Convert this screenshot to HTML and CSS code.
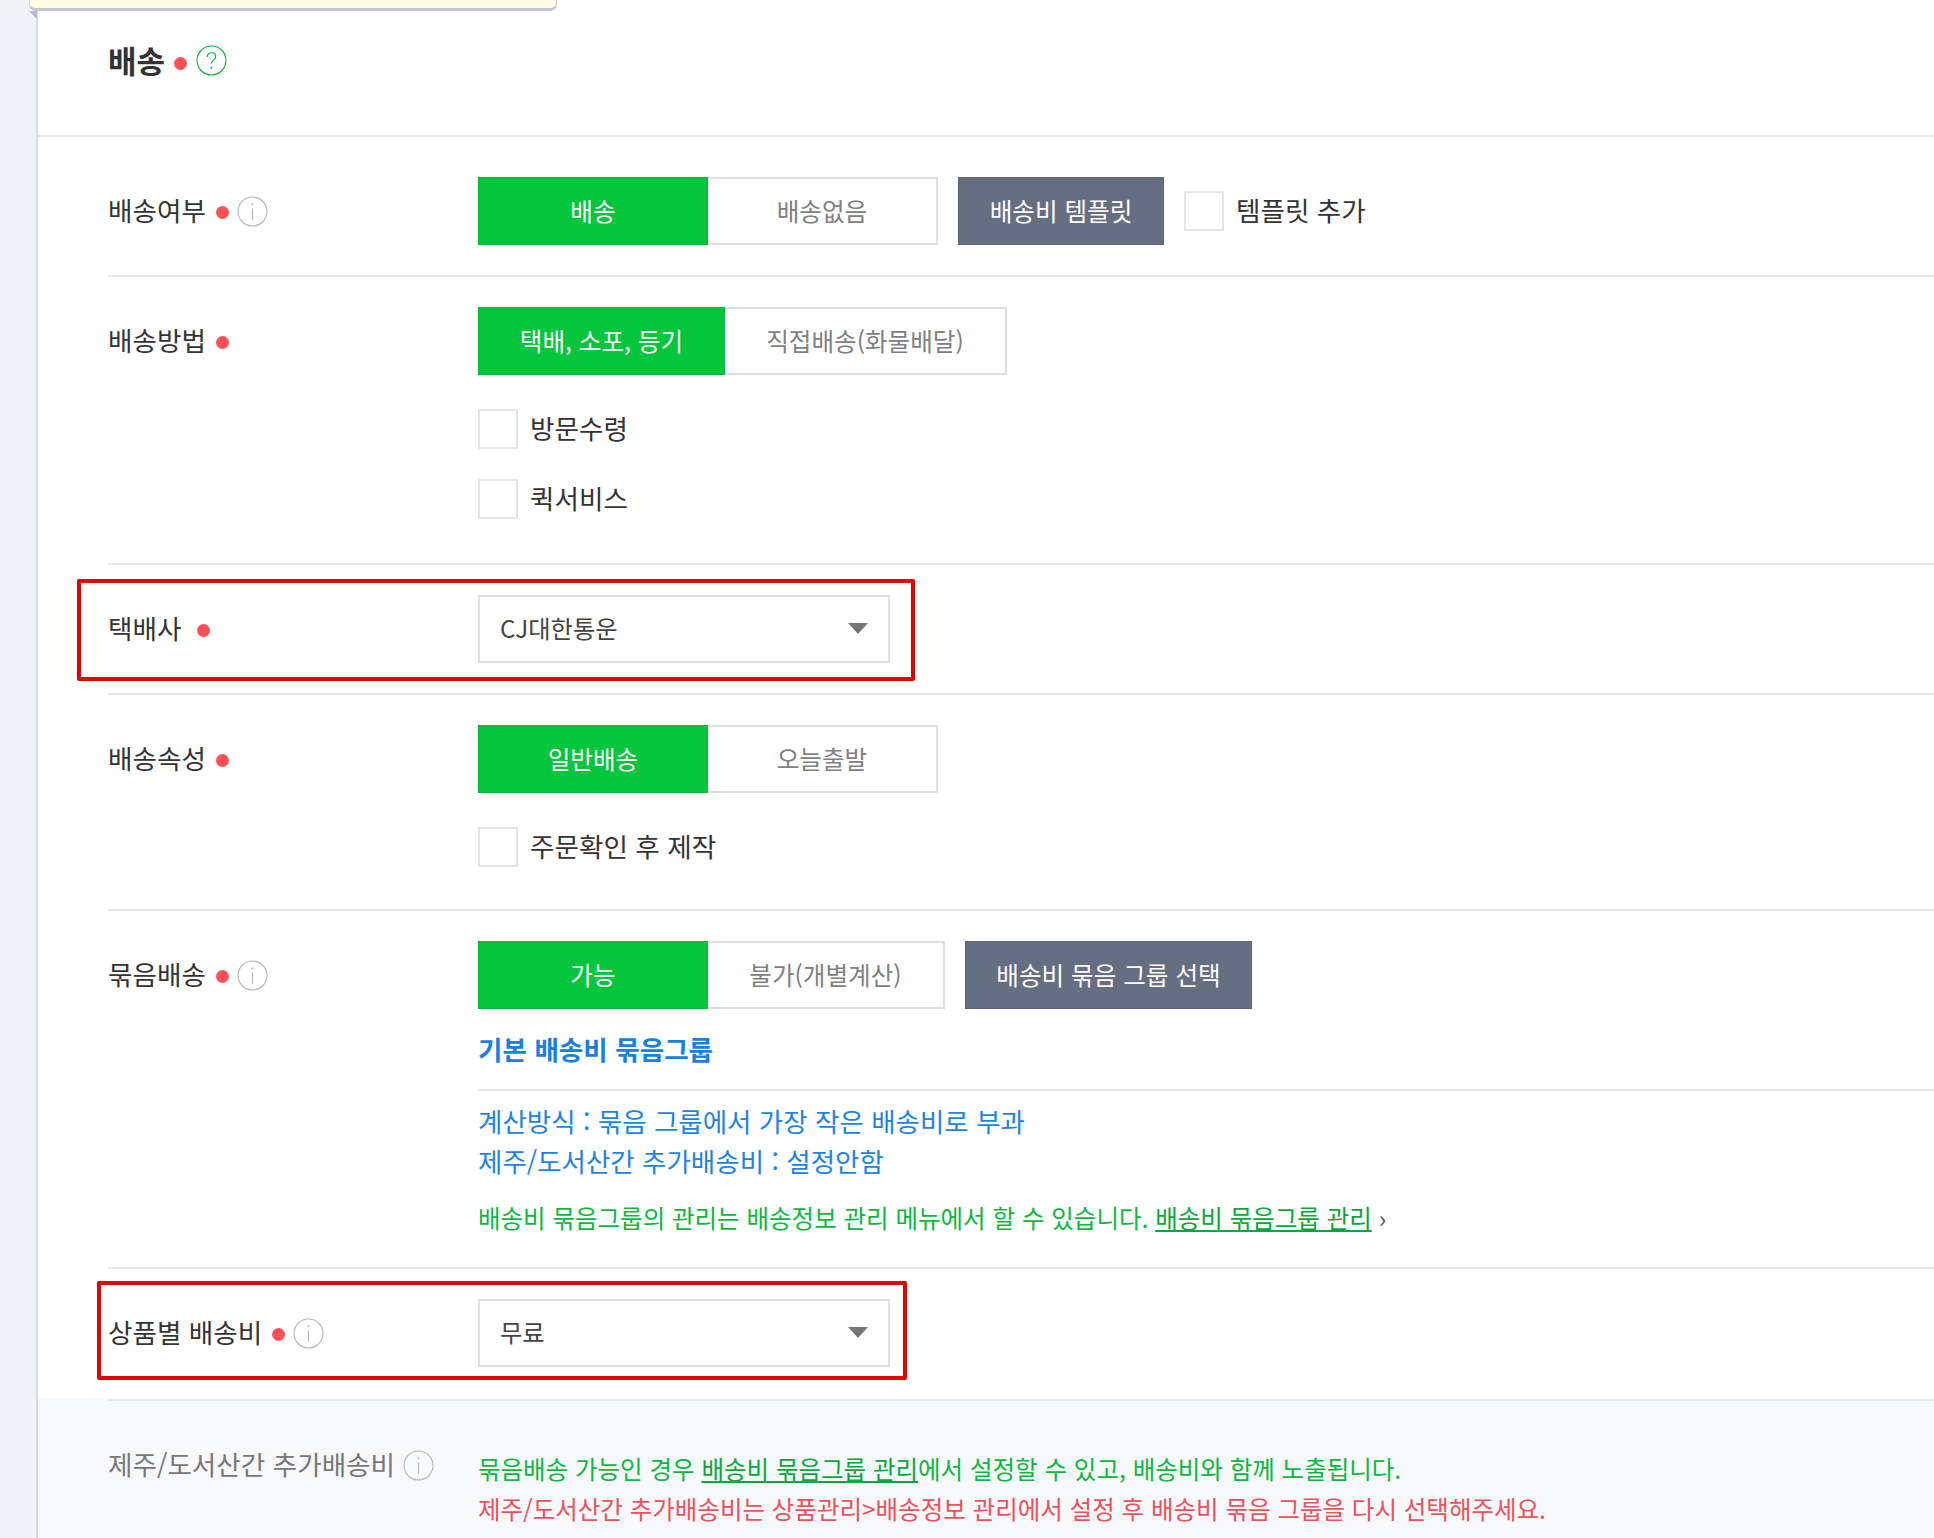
FILE: index.html
```html
<!DOCTYPE html>
<html lang="ko">
<head>
<meta charset="utf-8">
<title>배송</title>
<link rel="stylesheet" href="styles.css">
</head>
<body>
<div class="page">
  <aside class="rail"></aside>
  <main class="panel">
    <div class="note"></div>
    <div class="note-fold"></div>
    <header class="head">
      <h2 class="title">배송</h2>
      <span class="dot dot-title"></span>
      <svg class="icon icon-help" viewBox="0 0 30 30"><circle cx="15" cy="15" r="14" /><path d="M11 11.500c0-2.500 1.800-4 4-4s4 1.500 4 3.800c0 3-4 3.200-4 6.700" /><circle class="pip" cx="15" cy="22" r="1"/></svg>
    </header>

    <section class="row row-first">
      <div class="label"><span class="label-text">배송여부</span><span class="dot"></span>
        <svg class="icon icon-info" viewBox="0 0 30 30"><circle cx="15" cy="15" r="14" /><path d="M15 12v11" /><circle class="pip" cx="15" cy="8" r="1"/></svg>
      </div>
      <div class="body">
        <div class="controls">
          <div class="seg"><span class="opt on w230">배송</span><span class="opt w230">배송없음</span></div>
          <span class="btn-dark w206">배송비 템플릿</span>
          <span class="check"><span class="box"></span>템플릿 추가</span>
        </div>
      </div>
    </section>

    <section class="row row-method">
      <div class="label"><span class="label-text">배송방법</span><span class="dot"></span></div>
      <div class="body">
        <div class="seg"><span class="opt on w247">택배, 소포, 등기</span><span class="opt w282">직접배송(화물배달)</span></div>
        <span class="check check-gap"><span class="box"></span>방문수령</span>
        <span class="check check-gap-sm"><span class="box"></span>퀵서비스</span>
      </div>
    </section>

    <section class="row row-select">
      <div class="label"><span class="label-text">택배사</span><span class="dot dot-wide"></span></div>
      <div class="body"><div class="select">CJ대한통운<span class="caret"></span></div></div>
      <div class="mark mark-a"></div>
    </section>

    <section class="row row-attr">
      <div class="label"><span class="label-text">배송속성</span><span class="dot"></span></div>
      <div class="body">
        <div class="seg"><span class="opt on w230">일반배송</span><span class="opt w230">오늘출발</span></div>
        <span class="check check-gap"><span class="box"></span>주문확인 후 제작</span>
      </div>
    </section>

    <section class="row row-bundle">
      <div class="label"><span class="label-text">묶음배송</span><span class="dot"></span>
        <svg class="icon icon-info" viewBox="0 0 30 30"><circle cx="15" cy="15" r="14" /><path d="M15 12v11" /><circle class="pip" cx="15" cy="8" r="1"/></svg>
      </div>
      <div class="body">
        <div class="controls controls-wide">
          <div class="seg"><span class="opt on w230">가능</span><span class="opt w237">불가(개별계산)</span></div>
          <span class="btn-dark w287">배송비 묶음 그룹 선택</span>
        </div>
        <h3 class="group-title">기본 배송비 묶음그룹</h3>
        <div class="group-info">
          <p>계산방식 : 묶음 그룹에서 가장 작은 배송비로 부과</p>
          <p>제주/도서산간 추가배송비 : 설정안함</p>
        </div>
        <p class="hint">배송비 묶음그룹의 관리는 배송정보 관리 메뉴에서 할 수 있습니다. <a class="link" href="#">배송비 묶음그룹 관리</a> <span class="chev">›</span></p>
      </div>
    </section>

    <section class="row row-fee">
      <div class="label"><span class="label-text">상품별 배송비</span><span class="dot"></span>
        <svg class="icon icon-info" viewBox="0 0 30 30"><circle cx="15" cy="15" r="14" /><path d="M15 12v11" /><circle class="pip" cx="15" cy="8" r="1"/></svg>
      </div>
      <div class="body"><div class="select">무료<span class="caret"></span></div></div>
      <div class="mark mark-b"></div>
    </section>

    <section class="foot">
      <div class="foot-row">
        <div class="label label-muted"><span class="label-text">제주/도서산간 추가배송비</span>
          <svg class="icon icon-info" viewBox="0 0 30 30"><circle cx="15" cy="15" r="14" /><path d="M15 12v11" /><circle class="pip" cx="15" cy="8" r="1"/></svg>
        </div>
        <div class="body foot-body">
          <p class="green">묶음배송 가능인 경우 <a class="link" href="#">배송비 묶음그룹 관리</a>에서 설정할 수 있고, 배송비와 함께 노출됩니다.</p>
          <p class="red">제주/도서산간 추가배송비는 상품관리&gt;배송정보 관리에서 설정 후 배송비 묶음 그룹을 다시 선택해주세요.</p>
        </div>
      </div>
    </section>
  </main>
</div>
</body>
</html>
```
FILE: styles.css
```css
* { box-sizing: border-box; }
html, body { margin: 0; height: 100%; background: #fff; }
body {
  font-family: "Noto Sans CJK KR", "Noto Sans", sans-serif;
  font-size: 26.6px;
  color: #333;
  overflow: hidden;
}
p, h2, h3 { margin: 0; }
.page { display: flex; height: 1538px; }
.rail { width: 38px; flex: none; background: #eff2f6; border-right: 2px solid #d9dce3; }
.panel { flex: 1; position: relative; min-width: 0; }

.note {
  position: absolute; left: -9px; top: -20px; width: 528px; height: 31px;
  background: #fffde6; border: 1px solid #c5c7d0; border-bottom-width: 3px; border-radius: 0 0 7px 7px;
  border-left-color: #d5d6dc;
}
.note-fold {
  position: absolute; left: -9px; top: 11px; width: 0; height: 0;
  border-top: 8px solid #b4b7c9; border-left: 8px solid transparent;
}

.head { height: 136px; padding: 40px 0 0 70px; display: flex; align-items: flex-start; }
.title { font-size: 31px; font-weight: 700; line-height: 40px; color: #333; }
.dot { width: 13px; height: 13px; border-radius: 50%; background: #ff5058; flex: none; margin: 3px 0 0 10px; }
.dot-title { margin: 17px 0 0 9px; }
.dot-wide { margin-left: 16px; }
.icon { width: 31px; height: 31px; flex: none; margin-left: 8px; fill: none; stroke-width: 1.1; }
.icon .pip { stroke: none; }
.icon-help { margin: 5px 0 0 9px; stroke: #06b83c; }
.icon-help .pip { fill: #06b83c; }
.icon-info { stroke: #b5b8be; }
.icon-info .pip { fill: #b5b8be; }

.row { position: relative; display: flex; margin-left: 70px; border-bottom: 2px solid #e6e7ea; padding-top: 30px; }
.row-first { padding-top: 41px; padding-bottom: 30px; }
.row-first::before {
  content: ""; position: absolute; left: -70px; right: 0; top: -1px; height: 2px; background: #e6e7ea;
}
.row-method { padding-bottom: 44px; }
.row-select { padding-bottom: 30px; }
.row-attr { padding-bottom: 42px; }
.row-bundle { padding-bottom: 29px; }
.row-fee { padding-bottom: 31px; border-bottom: 0; }

.label { width: 370px; flex: none; height: 68px; display: flex; align-items: center; }
.label-text { margin-top: -3px; }
.body { flex: 1; min-width: 0; display: flex; flex-direction: column; align-items: flex-start; }

.controls { display: flex; align-items: center; }
.seg { display: flex; height: 68px; }
.opt {
  display: flex; align-items: center; justify-content: center; padding-bottom: 3px;
  border: 2px solid #dedfe1; border-left: 0; color: #808080; font-size: 24.6px;
}
.opt.on { background: #03c63c; border: 1px solid #08b83d; color: #fff; }
.w230 { width: 230px; }
.w237 { width: 237px; }
.w247 { width: 247px; }
.w282 { width: 282px; }
.w206 { width: 206px; }
.w287 { width: 287px; }
.btn-dark {
  height: 68px; margin-left: 20px; display: flex; align-items: center; justify-content: center; padding-bottom: 3px;
  background: #666e82; color: #fff; font-size: 24.6px; border: 1px solid #5d6478;
}

.check { display: flex; align-items: flex-start; height: 40px; line-height: 37px; }
.box { width: 40px; height: 40px; border: 2px solid #e4e5e8; background: #fff; margin-right: 12px; flex: none; }
.controls .check { margin-left: 20px; }
.check-gap { margin-top: 34px; }
.check-gap-sm { margin-top: 30px; }

.select {
  position: relative; width: 412px; height: 68px; padding: 0 20px 3px; display: flex; align-items: center;
  border: 2px solid #dedfe1; background: #fff; color: #444; font-size: 24.3px;
}
.caret {
  position: absolute; right: 20px; top: 26px; width: 0; height: 0;
  border-left: 10px solid transparent; border-right: 10px solid transparent; border-top: 11px solid #777;
}
.mark { position: absolute; border: 4px solid #e60000; border-radius: 2px; pointer-events: none; }
.mark-a { left: -31px; top: 14px; width: 838px; height: 102px; }
.mark-b { left: -11px; top: 12px; width: 810px; height: 99px; }

.group-title { margin-top: 20px; font-size: 26.6px; font-weight: 700; line-height: 40px; color: #1a80e0; }
.group-info { align-self: stretch; margin-top: 20px; border-top: 2px solid #e6e7ea; padding-top: 10px; }
.group-info p { font-size: 26.5px; line-height: 40px; color: #1d84e2; }
.hint { margin-top: 17px; font-size: 24.5px; line-height: 40px; color: #0cb83e; }
.link { color: #0aa83a; text-decoration: underline; }
.chev { color: #555; }

.foot { background: #f7f9fc; padding: 1px 0 0 70px; height: 140px; }
.foot-row { display: flex; border-top: 2px solid #e6e7ea; padding-top: 30px; }
.label-muted { color: #777; }
.label-muted .icon { margin-left: 8px; }
.foot-body p { font-size: 24.5px; line-height: 40px; }
.foot-body { padding-top: 18px; }
.green { color: #0cb83e; }
.red { color: #f0505a; }
```
